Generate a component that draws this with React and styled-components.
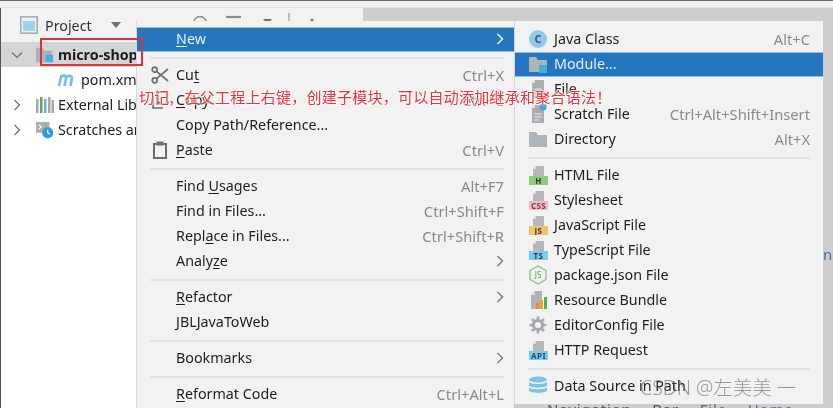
import React from 'react';
import styled, { createGlobalStyle } from 'styled-components';

const GlobalStyle = createGlobalStyle`
  html, body {
    margin: 0;
    padding: 0;
    background: #cdcdcd;
  }
  body {
    font-family: 'Noto Sans', 'Open Sans', sans-serif;
    overflow: hidden;
  }
`;

// Window

const Page = styled.div`
  position: relative;
  width: 833px;
  height: 408px;
  overflow: hidden;
  display: flex;
  flex-direction: column;
  background: #f1f1f1;
  border-top: 1px solid #6a6a6a;
  box-sizing: border-box;
  filter: blur(0.35px);
`;

const TopGap = styled.div`
  height: 7px;
  flex: none;
  border-bottom: 1px solid #e2e2e2;
  box-sizing: border-box;
`;

const Body = styled.div`
  flex: 1;
  display: flex;
  min-height: 0;
`;

const Sidebar = styled.div`
  width: 363px;
  flex: none;
  display: flex;
  flex-direction: column;
  background: #fff;
  border-left: 1px solid #555;
  box-sizing: border-box;
`;

const SidebarHeader = styled.div`
  height: 34px;
  flex: none;
  display: flex;
  align-items: center;
  gap: 7px;
  padding-left: 19px;
  background: #f2f2f2;
  font-size: 14.3px;
  color: #333;
`;

const HeaderCaret = styled.span`
  width: 0;
  height: 0;
  margin-left: 12px;
  border-left: 5px solid transparent;
  border-right: 5px solid transparent;
  border-top: 6px solid #6e6e6e;
`;

const HeaderTools = styled.span`
  display: flex;
  margin-left: 64px;
  align-self: flex-start;
  margin-top: 5px;
`;

const TreeRow = styled.div`
  height: 25px;
  display: flex;
  align-items: center;
  gap: 4px;
  padding-left: ${(props) => props.$indent}px;
  box-sizing: border-box;
  background: ${(props) => (props.$selected ? '#d5d5d5' : 'transparent')};
  color: #1c1c1c;
  font-size: 14.3px;
  font-weight: ${(props) => (props.$selected ? 700 : 400)};
  white-space: nowrap;
`;

const TreeIcon = styled.span`
  width: 18px;
  margin-left: 9px;
  flex: none;
  display: flex;
  align-items: center;
`;

const Editor = styled.div`
  flex: 1;
  position: relative;
  background: #cdcdcd;
  color: #3f6f9e;
  font-size: 15px;
  white-space: nowrap;
  overflow: hidden;
`;

const EditorHintRight = styled.span`
  position: absolute;
  left: 460px;
  top: 236px;
`;

const EditorHintBottom = styled.span`
  position: absolute;
  left: 184px;
  top: 391px;
  word-spacing: 16px;
  letter-spacing: 0.8px;
`;

const HintDark = styled.span`
  color: #555;
`;

// Context menus

const Menu = styled.div`
  position: absolute;
  top: 20px;
  left: ${(props) => props.$left}px;
  width: ${(props) => props.$width}px;
  height: ${(props) => props.$height}px;
  box-sizing: border-box;
  padding-top: 6px;
  background: #f2f2f2;
  border-left: 1px solid #d8d8d8;
  font-size: 14.3px;
  color: #1e1e1e;
`;

const Row = styled.div`
  height: 25px;
  box-sizing: border-box;
  display: flex;
  align-items: center;
  gap: 6px;
  padding: 0 ${(props) => props.$right}px 2px ${(props) => props.$left}px;
  white-space: nowrap;
  ${(props) =>
    props.$active &&
    `
    background: #2675bf;
    color: #e6f0fa;
    border-top: 1px solid #8fc0e8;
    border-bottom: 1px solid #8fc0e8;
  `}
`;

const IconSlot = styled.span`
  width: 20px;
  height: 20px;
  flex: none;
  display: flex;
  align-items: center;
  justify-content: center;
`;

const Label = styled.span`
  flex: 1;
`;

const Shortcut = styled.span`
  color: #8a8a8a;
  font-size: 14.7px;
`;

const Mnemonic = styled.span`
  text-decoration: underline;
  text-underline-offset: 2px;
`;

const Separator = styled.div`
  height: 2px;
  margin: 4.5px ${(props) => props.$right}px 4.5px ${(props) => props.$left}px;
  background: #e4e4e4;
`;

// Overlays

const Highlight = styled.div`
  position: absolute;
  left: 40px;
  top: 37px;
  width: 103px;
  height: 28px;
  box-sizing: border-box;
  border: 2px solid #d8343c;
`;

const Annotation = styled.div`
  position: absolute;
  left: 139px;
  top: 85px;
  color: #e8323c;
  font-family: 'Noto Sans CJK SC', sans-serif;
  font-size: 15px;
  line-height: 22px;
  letter-spacing: 0.25px;
  word-spacing: 7px;
  white-space: nowrap;
  text-shadow: 0 0 2px #fff, 0 0 2px #fff, 0 0 3px #fff;
`;

const Watermark = styled.div`
  position: absolute;
  left: 640px;
  top: 374px;
  color: rgba(100, 100, 100, 0.62);
  font-family: 'Noto Sans', 'Noto Sans CJK SC', sans-serif;
  font-size: 19.5px;
  font-weight: 300;
  line-height: 26px;
  white-space: nowrap;
`;

// Icons

const FileIcon = ({ band, text, textColor = '#3a3a3a' }) => (
  <svg width="19" height="20" viewBox="0 0 19 20">
    <path d="M7 1h8v10H4V4z" fill="#b4b8ba" />
    <path d="M7 1v3H4z" fill="#dcdcdc" />
    <rect x="0" y="11" width="19" height="9" fill={band} />
    <text x="9.5" y="18.6" textAnchor="middle" fontSize="8" fontWeight="700" fontFamily="Noto Sans" letterSpacing="0.4" fill={textColor}>
      {text}
    </text>
  </svg>
);

const FolderIcon = ({ badge }) => (
  <svg width="20" height="20" viewBox="0 0 20 20">
    <path d="M1 3h7l2 3h9v12H1z" fill="#adb5ba" />
    {badge && <rect x="11" y="11" width="8" height="8" fill="#3fb0e0" />}
  </svg>
);

const ClassIcon = () => (
  <svg width="20" height="20" viewBox="0 0 20 20">
    <circle cx="10" cy="10" r="9" fill="#8cccea" />
    <text x="10" y="14" textAnchor="middle" fontSize="11" fontWeight="700" fontFamily="Noto Sans" fill="#3b5a6a">
      C
    </text>
  </svg>
);

const PageIcon = ({ clock }) => (
  <svg width="20" height="20" viewBox="0 0 20 20">
    <path d="M7 1h9v18H4V4z" fill="#a9aeb1" />
    <path d="M7 1v3H4z" fill="#dedede" />
    <path d="M6.5 10h7M6.5 13h7M6.5 16h5" stroke="#f0f0f0" strokeWidth="1" />
    {clock && <circle cx="15" cy="3" r="3.6" fill="#3fa7dc" />}
  </svg>
);

const ScissorsIcon = () => (
  <svg width="18" height="18" viewBox="0 0 18 18" fill="none" stroke="#6e6e6e" strokeWidth="1.7">
    <circle cx="3.7" cy="3.7" r="2.5" />
    <circle cx="3.7" cy="14.3" r="2.5" />
    <path d="M5.6 5.4 17 15M5.6 12.6 17 3" />
  </svg>
);

const CopyIcon = () => (
  <svg width="16" height="18" viewBox="0 0 16 18" fill="none" stroke="#6e6e6e" strokeWidth="1.7">
    <path d="M5 1h10v12H5zM1 5v12h10" />
  </svg>
);

const PasteIcon = () => (
  <svg width="14" height="18" viewBox="0 0 14 18" fill="none" stroke="#6e6e6e" strokeWidth="2">
    <rect x="1" y="3" width="12" height="14" />
    <rect x="4" y="1" width="6" height="3" fill="#6e6e6e" strokeWidth="1" />
  </svg>
);

const NodeIcon = () => (
  <svg width="18" height="20" viewBox="0 0 18 20">
    <path d="M9 1l8 4.5v9L9 19l-8-4.5v-9z" fill="#eef5ec" stroke="#86b98a" strokeWidth="1.2" />
    <text x="9" y="13.2" textAnchor="middle" fontSize="8" fontFamily="Noto Sans" fill="#5e9a64">
      JS
    </text>
  </svg>
);

const BundleIcon = () => (
  <svg width="19" height="20" viewBox="0 0 19 20">
    <path d="M6 1h7v18H2V5z" fill="#aeb3b6" />
    <path d="M6 1v4H2z" fill="#dedede" />
    <rect x="7" y="13" width="3" height="6" fill="#ef8b33" />
    <rect x="11" y="10" width="3" height="9" fill="#e8a33a" />
    <rect x="15" y="7" width="3" height="12" fill="#62a84f" />
  </svg>
);

const GearIcon = () => (
  <svg width="18" height="18" viewBox="0 0 18 18" fill="none" stroke="#a3a8ab">
    <circle cx="9" cy="9" r="4.6" strokeWidth="3" />
    <path d="M9 0.5v3M9 14.5v3M0.5 9h3M14.5 9h3M3 3l2.1 2.1M12.9 12.9 15 15M15 3l-2.1 2.1M5.1 12.9 3 15" strokeWidth="2.6" />
  </svg>
);

const DatabaseIcon = () => (
  <svg width="20" height="20" viewBox="0 0 20 20" fill="#7cc4e6">
    <ellipse cx="10" cy="3.5" rx="9" ry="3" />
    <path d="M1 6c2 2.6 16 2.6 18 0v3.6c-2 2.8-16 2.8-18 0zM1 11.2c2 2.6 16 2.6 18 0v3.6c-2 2.8-16 2.8-18 0z" />
  </svg>
);

const ChevronIcon = ({ color = '#7a7a7a' }) => (
  <svg width="8" height="12" viewBox="0 0 8 12" fill="none" stroke={color} strokeWidth="1.4">
    <path d="M1.5 1 6.5 6l-5 5" />
  </svg>
);

const TreeArrow = ({ open }) => (
  <svg width="12" height="12" viewBox="0 0 12 12" fill="none" stroke="#6e6e6e" strokeWidth="1.2">
    <path d={open ? 'M1 3.5l5 5 5-5' : 'M3.5 1l5 5-5 5'} />
  </svg>
);

const ProjectIcon = () => (
  <svg width="18" height="18" viewBox="0 0 18 18">
    <rect x="0.8" y="0.8" width="16.4" height="16.4" fill="#eef0f1" stroke="#a9aeb1" strokeWidth="1.6" />
    <rect x="3" y="5" width="12" height="10" fill="#9fd3ec" />
  </svg>
);

// only the upper edge of these shows above the menu
const ToolbarIcons = () => (
  <svg width="130" height="20" viewBox="0 0 130 20" fill="none" stroke="#8a8a8a">
    <circle cx="8" cy="10" r="6.5" strokeWidth="1.4" />
    <path d="M34 4h15" strokeWidth="2.2" />
    <path d="M71 6h9l-4.5 5z" fill="#6e6e6e" stroke="none" />
    <path d="M97 0v10" strokeWidth="1" />
    <path d="M120 5l-4 6h8z" fill="#6e6e6e" stroke="none" />
  </svg>
);

const MavenIcon = () => (
  <svg width="20" height="14" viewBox="0 0 20 14" fill="none" stroke="#6fc3e8" strokeWidth="2.6">
    <path d="M2 13 4.5 2M4 4c2-2 5-2 5 1L7.5 13M9 5c1-3 6-3 6 0l-1.6 8" />
  </svg>
);

const LibrariesIcon = () => (
  <svg width="18" height="16" viewBox="0 0 18 16">
    <rect x="0" y="2" width="2.5" height="14" fill="#a4a9ac" />
    <rect x="4" y="0" width="2.5" height="16" fill="#62a84f" />
    <rect x="8" y="2" width="2.5" height="14" fill="#5db5e0" />
    <rect x="12" y="0" width="2.5" height="16" fill="#a4a9ac" />
    <rect x="15.5" y="3" width="2.5" height="13" fill="#a4a9ac" />
  </svg>
);

const ScratchesIcon = () => (
  <svg width="20" height="20" viewBox="0 0 20 20">
    <rect x="0" y="1" width="15" height="12" fill="#a9aeb1" />
    <path d="M3 4l3 2.5L3 9" fill="none" stroke="#fff" strokeWidth="1.2" />
    <circle cx="13" cy="13" r="6.2" fill="#2f9fd8" />
    <path d="M13 9.5V13l2.5 1.6" fill="none" stroke="#fff" strokeWidth="1.2" />
  </svg>
);

const ModuleIcon = () => (
  <svg width="20" height="18" viewBox="0 0 20 18">
    <path d="M0 1h7l2 3h9v13H0z" fill="#a9b2b8" />
    <rect x="11" y="9" width="8" height="8" fill="#3fb0e0" />
  </svg>
);

// Menu data

const mainMenu = [
  { label: <><Mnemonic>N</Mnemonic>ew</>, arrow: true, active: true },
  { sep: true },
  { label: <>Cu<Mnemonic>t</Mnemonic></>, icon: <ScissorsIcon />, shortcut: 'Ctrl+X' },
  { label: <><Mnemonic>C</Mnemonic>opy</>, icon: <CopyIcon />, shortcut: 'Ctrl+C' },
  { label: 'Copy Path/Reference...' },
  { label: <><Mnemonic>P</Mnemonic>aste</>, icon: <PasteIcon />, shortcut: 'Ctrl+V' },
  { sep: true },
  { label: <>Find <Mnemonic>U</Mnemonic>sages</>, shortcut: 'Alt+F7' },
  { label: 'Find in Files...', shortcut: 'Ctrl+Shift+F' },
  { label: <>Repl<Mnemonic>a</Mnemonic>ce in Files...</>, shortcut: 'Ctrl+Shift+R' },
  { label: <>Analy<Mnemonic>z</Mnemonic>e</>, arrow: true },
  { sep: true },
  { label: <><Mnemonic>R</Mnemonic>efactor</>, arrow: true },
  { label: 'JBLJavaToWeb' },
  { sep: true },
  { label: 'Bookmarks', arrow: true },
  { sep: true },
  { label: <><Mnemonic>R</Mnemonic>eformat Code</>, shortcut: 'Ctrl+Alt+L' },
];

const newMenu = [
  { label: 'Java Class', icon: <ClassIcon />, shortcut: 'Alt+C' },
  { label: 'Module...', icon: <FolderIcon badge />, active: true },
  { label: 'File', icon: <PageIcon /> },
  { label: 'Scratch File', icon: <PageIcon clock />, shortcut: 'Ctrl+Alt+Shift+Insert' },
  { label: 'Directory', icon: <FolderIcon />, shortcut: 'Alt+X' },
  { sep: true },
  { label: 'HTML File', icon: <FileIcon band="#8fcb78" text="H" /> },
  { label: 'Stylesheet', icon: <FileIcon band="#f3b9c4" text="CSS" textColor="#8a3a4a" /> },
  { label: 'JavaScript File', icon: <FileIcon band="#f6c26c" text="JS" /> },
  { label: 'TypeScript File', icon: <FileIcon band="#7ccbee" text="TS" textColor="#1f4a66" /> },
  { label: 'package.json File', icon: <NodeIcon /> },
  { label: 'Resource Bundle', icon: <BundleIcon /> },
  { label: 'EditorConfig File', icon: <GearIcon /> },
  { label: 'HTTP Request', icon: <FileIcon band="#7ccbee" text="API" textColor="#1f4a66" /> },
  { sep: true },
  { label: 'Data Source in Path', icon: <DatabaseIcon /> },
];

const MenuItems = ({ items, left, right }) =>
  items.map((item, i) =>
    item.sep ? (
      <Separator key={i} $left={left} $right={right} />
    ) : (
      <Row key={i} $active={item.active} $left={left} $right={right}>
        <IconSlot>{item.icon}</IconSlot>
        <Label>{item.label}</Label>
        {item.shortcut && <Shortcut>{item.shortcut}</Shortcut>}
        {item.arrow && <ChevronIcon color={item.active ? '#fff' : '#7a7a7a'} />}
      </Row>
    )
  );

const App = () => (
  <Page>
    <GlobalStyle />
    <TopGap />
    <Body>
      <Sidebar>
        <SidebarHeader>
          <ProjectIcon />
          Project
          <HeaderCaret />
          <HeaderTools>
            <ToolbarIcons />
          </HeaderTools>
        </SidebarHeader>
        <TreeRow $selected $indent={10}>
          <TreeArrow open />
          <TreeIcon>
            <ModuleIcon />
          </TreeIcon>
          micro-shop
        </TreeRow>
        <TreeRow $indent={56}>
          <MavenIcon />
          pom.xml
        </TreeRow>
        <TreeRow $indent={10}>
          <TreeArrow />
          <TreeIcon>
            <LibrariesIcon />
          </TreeIcon>
          External Libraries
        </TreeRow>
        <TreeRow $indent={10}>
          <TreeArrow />
          <TreeIcon>
            <ScratchesIcon />
          </TreeIcon>
          Scratches and Consoles
        </TreeRow>
      </Sidebar>
      <Editor>
        <EditorHintRight>ni</EditorHintRight>
        <EditorHintBottom>
          <HintDark>Navigation Bar</HintDark> File Home
        </EditorHintBottom>
      </Editor>
    </Body>
    <Menu $left={136} $width={378} $height={388}>
      <MenuItems items={mainMenu} left={13} right={10} />
    </Menu>
    <Menu $left={514} $width={309} $height={383}>
      <MenuItems items={newMenu} left={13} right={13} />
    </Menu>
    <Highlight />
    <Annotation>切记, 在父工程上右键，创建子模块，可以自动添加继承和聚合语法！</Annotation>
    <Watermark>CSDN @左美美 一</Watermark>
  </Page>
);

export default App;
